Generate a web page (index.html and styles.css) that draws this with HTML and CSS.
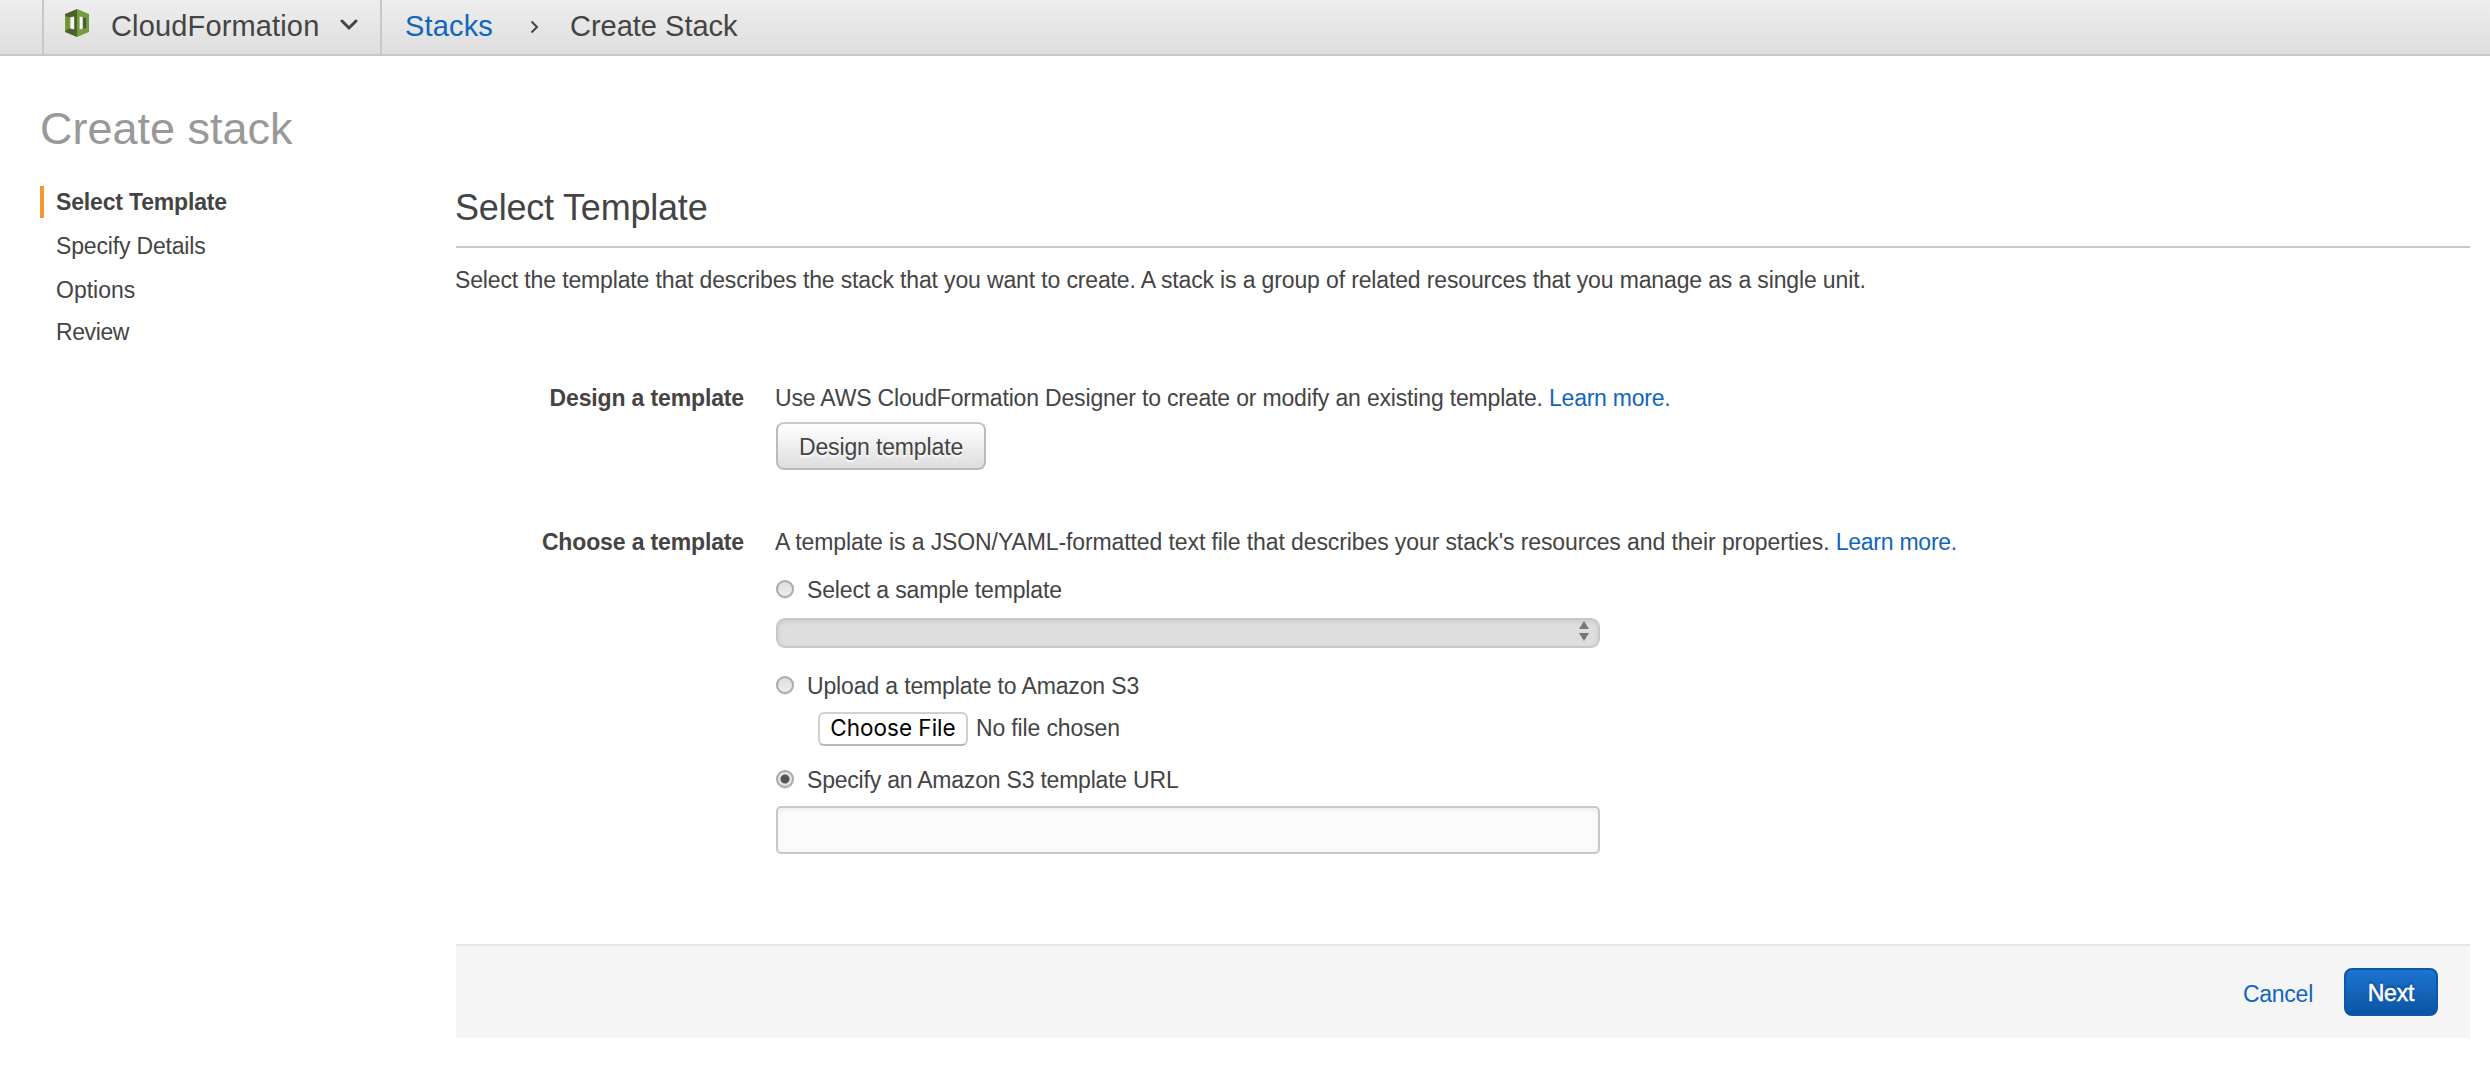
FILE: index.html
```html
<!DOCTYPE html>
<html lang="en">
<head>
<meta charset="utf-8">
<title>Create Stack</title>
<link rel="stylesheet" href="styles.css">
</head>
<body>
<header class="topbar">
  <div class="service">
    <svg class="service-icon" width="24" height="28" viewBox="0 0 24 28">
      <path fill="#4b612c" d="M12 0 0 5v18l12 5z"/>
      <path fill="#759c3e" d="M12 0l12 5v18l-12 5z"/>
      <path fill="#759c3e" d="M0 6.500l2.700 1.500v12L0 22.500z"/>
      <path fill="#759c3e" d="M2.700 8.500l2.800-.5v12l-2.800-.5z"/>
      <path fill="#f4f4f4" d="M5.300 8.300l3.900-.8v13l-3.900-1z"/>
      <path fill="#f4f4f4" d="M14.600 7.500l3.600.8v11.200l-3.600 1z"/>
      <path fill="#4b612c" d="M17.800 8.200l3.400.8v10.200l-3.400.6z"/>
    </svg>
    <span class="service-name">CloudFormation</span>
    <svg class="service-caret" width="18" height="12" viewBox="0 0 18 12"><path d="M2 2l7 7 7-7" fill="none" stroke="#444" stroke-width="3" stroke-linecap="round"/></svg>
  </div>
  <nav class="crumbs">
    <a class="crumb-link">Stacks</a>
    <svg class="crumb-arrow" width="9" height="14" viewBox="0 0 9 14"><path d="M1.500 1.500L7 7l-5.500 5.500" fill="none" stroke="#444" stroke-width="2"/></svg>
    <span class="crumb-here">Create Stack</span>
  </nav>
</header>
<div class="page">
  <aside class="side">
    <h1>Create stack</h1>
    <ul class="steps">
      <li class="step current">Select Template</li>
      <li class="step">Specify Details</li>
      <li class="step options">Options</li>
      <li class="step last">Review</li>
    </ul>
  </aside>
  <main class="main">
    <h2>Select Template</h2>
    <p class="intro">Select the template that describes the stack that you want to create. A stack is a group of related resources that you manage as a single unit.</p>
    <section class="row design">
      <h3>Design a template</h3>
      <div class="field">
        <p class="help"><span class="help-a">Use AWS CloudFormation Designer to create or modify an existing template.</span> <a>Learn more.</a></p>
        <button class="btn">Design template</button>
      </div>
    </section>
    <section class="row">
      <h3>Choose a template</h3>
      <div class="field">
        <p class="help"><span class="help-b">A template is a JSON/YAML-formatted text file that describes your stack's resources and their properties.</span> <a>Learn more.</a></p>
        <div class="option first"><i class="radio"></i><span>Select a sample template</span></div>
        <div class="select"><svg width="10" height="20" viewBox="0 0 10 20"><path fill="#777" d="M5 0l5 8H0zM0 12h10l-5 8z"/></svg></div>
        <div class="option second"><i class="radio"></i><span>Upload a template to Amazon S3</span></div>
        <div class="file"><button class="file-btn">Choose File</button><span>No file chosen</span></div>
        <div class="option third"><i class="radio checked"></i><span>Specify an Amazon S3 template URL</span></div>
        <div class="url"></div>
      </div>
    </section>
    <footer class="actions"><a class="cancel">Cancel</a><button class="btn primary">Next</button></footer>
  </main>
</div>
</body>
</html>
```
FILE: styles.css
```css
* { box-sizing: border-box; }
body { margin: 0; background: #fff; color: #444; font: 23px/30px "Liberation Sans", Arial, sans-serif; letter-spacing: -.14px; }
h1, h2, h3, p, ul { margin: 0; padding: 0; }
a { color: #1166bb; text-decoration: none; }
svg { display: block; flex: none; }
button { font: inherit; color: inherit; letter-spacing: inherit; white-space: nowrap; margin: 0; padding: 0; }

.topbar { display: flex; height: 56px; border-bottom: 2px solid #c8c8c8; background: linear-gradient(#eee, #dedede); font-size: 29px; line-height: 52px; letter-spacing: .15px; }
.service { display: flex; width: 340px; margin-left: 42px; padding-left: 21px; border: solid #c8c8c8; border-width: 0 2px; }
.service-icon { margin: 9px 22px 0 0; }
.service-caret { margin: 19px 0 0 21px; }
.crumbs { display: flex; padding-left: 23px; }
.crumb-arrow { margin: 20px 31px 0 37px; }
.crumb-here { letter-spacing: 0; }

.page { display: flex; padding-right: 20px; }
.side { width: 456px; padding: 48px 0 0 40px; }
h1 { color: #999; font-size: 45px; font-weight: 400; line-height: 50px; letter-spacing: 0; }
.steps { list-style: none; margin-top: 32px; }
.step { height: 32px; margin-bottom: 12px; padding-left: 12px; border-left: 4px solid transparent; line-height: 32px; letter-spacing: -.17px; }
.current { border-left-color: #f7962a; font-weight: 700; }
.options { letter-spacing: 0; }
.last { margin-top: -2px; letter-spacing: -.4px; }

.main { flex: 1; padding-top: 128px; }
h2 { height: 64px; border-bottom: 2px solid #c8c8c8; font-size: 36px; font-weight: 400; line-height: 47px; letter-spacing: -.2px; text-indent: -1px; }
.intro { margin-top: 17px; text-indent: -1px; }
.row { display: flex; }
.design { margin: 88px 0 57px; }
h3 { width: 288px; margin-right: 31px; text-align: right; font: inherit; font-weight: 700; }
.help { white-space: nowrap; }
.help a { letter-spacing: -.25px; }
.help-a { letter-spacing: -.17px; }
.help-b { letter-spacing: -.1px; }
.btn { display: block; height: 48px; padding: 2px 0 0; border: 2px solid #bbb; border-top-color: #c8c8c8; border-radius: 8px; background: linear-gradient(#fff, #dedede); text-shadow: 0 2px 2px #fff; line-height: 42px; }
.design .btn { width: 210px; margin: 9px 0 0 1px; }
.option { display: flex; height: 30px; margin-left: 1px; }
.radio { flex: none; width: 18px; height: 18px; margin: 5px 13px 0 0; border: 2px solid #aaa; border-radius: 50%; background: linear-gradient(#ddd, #eee); box-shadow: 0 1px 1px #ddd; }
.checked { background: radial-gradient(circle, #555 0 4px, #e5e5e5 5px); }
.first { margin-top: 18px; }
.select { display: flex; justify-content: flex-end; width: 824px; height: 30px; margin: 13px 0 0 1px; padding: 1px 9px; border: 2px solid #c8c8c8; border-radius: 9px; background: #dedede; box-shadow: inset 0 2px 4px #ccc; }
.second { margin-top: 23px; }
.file { display: flex; height: 34px; margin: 11px 0 0 43px; line-height: 32px; }
.file-btn { width: 150px; height: 34px; margin-right: 8px; padding-bottom: 2px; border: 2px solid #d0d0d0; border-bottom-color: #b8b8b8; border-radius: 6px; background: #fff; color: #000; font: 22.5px/28px Inter, sans-serif; letter-spacing: 0; }
.third { margin-top: 19px; letter-spacing: -.21px; }
.url { width: 824px; height: 48px; margin: 11px 0 0 1px; border: 2px solid #c8c8c8; border-radius: 5px; background: #fbfbfb; box-shadow: inset 0 2px 4px #eee; }
.actions { display: flex; justify-content: flex-end; height: 94px; margin-top: 90px; padding: 22px 32px 0 0; border-top: 2px solid #e5e5e5; background: #f5f5f5; }
.cancel { margin-right: 31px; line-height: 53px; letter-spacing: -.25px; }
.primary { width: 94px; border-color: #0d57a6; background: linear-gradient(#1c75d0, #0b54a3); color: #fff; text-shadow: 0 -2px 2px #064080; -webkit-text-stroke: .5px #fff; }
```
